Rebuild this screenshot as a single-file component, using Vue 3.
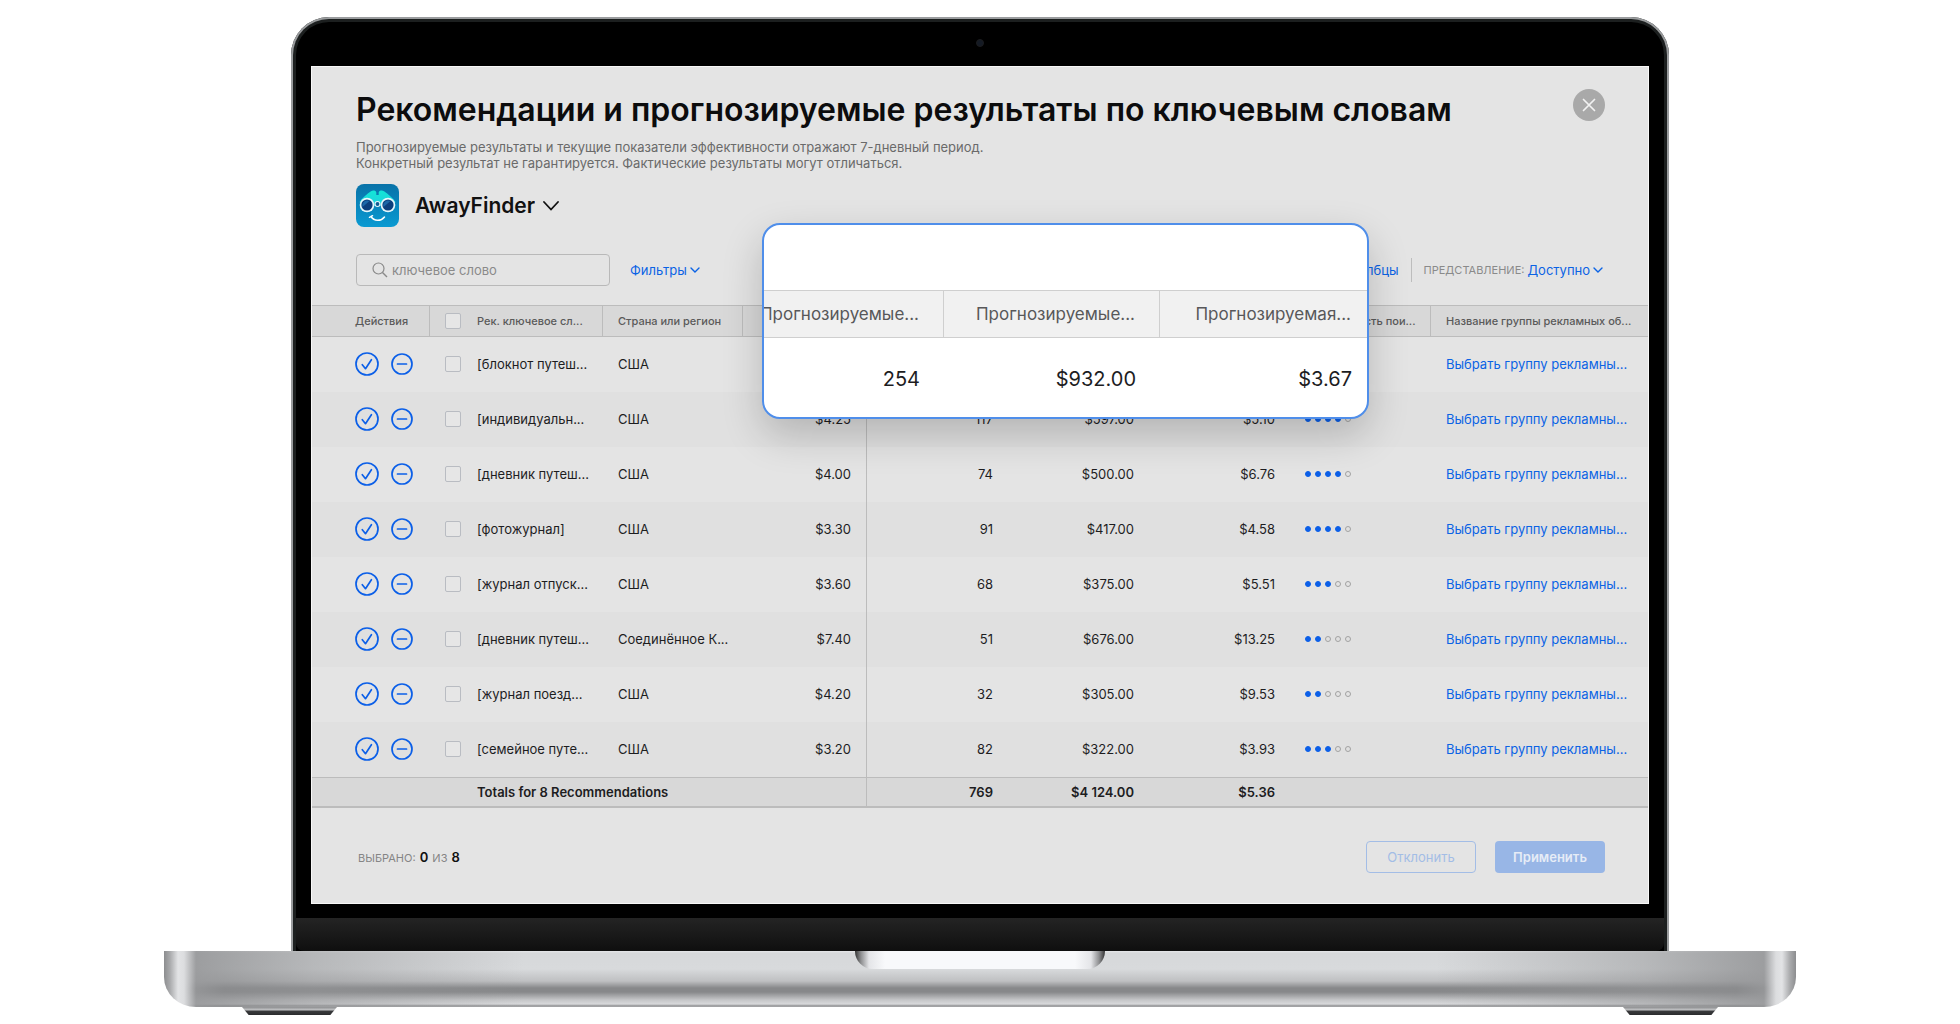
<script setup>
import { ref } from 'vue'

const query = ref('')
const app = ref('AwayFinder')
const view = ref('Доступно')

const rows = ref([
  { keyword: '[блокнот путеш...', country: 'США', bid: '', installs: '', spend: '', cpa: '', popularity: 5 },
  { keyword: '[индивидуальн...', country: 'США', bid: '$4.25', installs: '117', spend: '$597.00', cpa: '$5.10', popularity: 4 },
  { keyword: '[дневник путеш...', country: 'США', bid: '$4.00', installs: '74', spend: '$500.00', cpa: '$6.76', popularity: 4 },
  { keyword: '[фотожурнал]', country: 'США', bid: '$3.30', installs: '91', spend: '$417.00', cpa: '$4.58', popularity: 4 },
  { keyword: '[журнал отпуск...', country: 'США', bid: '$3.60', installs: '68', spend: '$375.00', cpa: '$5.51', popularity: 3 },
  { keyword: '[дневник путеш...', country: 'Соединённое К...', bid: '$7.40', installs: '51', spend: '$676.00', cpa: '$13.25', popularity: 2 },
  { keyword: '[журнал поезд...', country: 'США', bid: '$4.20', installs: '32', spend: '$305.00', cpa: '$9.53', popularity: 2 },
  { keyword: '[семейное путе...', country: 'США', bid: '$3.20', installs: '82', spend: '$322.00', cpa: '$3.93', popularity: 3 },
])
</script>

<template>
  <main class="stage">
    <div class="lid">
      <span class="camera"></span>
      <section class="screen">
        <header class="head">
          <div class="title-row">
            <h1>Рекомендации и прогнозируемые результаты по ключевым словам</h1>
            <button class="close" type="button" aria-label="Закрыть">
              <svg viewBox="0 0 32 32" width="32" height="32"><path d="M10.500 10.500l11 11M21.500 10.500l-11 11" fill="none" stroke="#f2f2f2" stroke-width="1.700" stroke-linecap="round" /></svg>
            </button>
          </div>
          <p class="note">
            Прогнозируемые результаты и текущие показатели эффективности отражают 7-дневный период.<br />
            Конкретный результат не гарантируется. Фактические результаты могут отличаться.
          </p>
          <div class="app-row">
            <svg class="app-icon" viewBox="0 0 43 43" width="43" height="43" aria-hidden="true">
              <defs>
                <linearGradient id="icon-bg" x1="0" y1="0" x2="0" y2="1"><stop offset="0" stop-color="#0872a8" /><stop offset="1" stop-color="#0a9ad2" /></linearGradient>
                <linearGradient id="icon-body" x1="0" y1="0" x2="0" y2="1"><stop offset="0" stop-color="#12e6d6" /><stop offset="1" stop-color="#22d0e0" /></linearGradient>
              </defs>
              <rect width="43" height="43" rx="8" fill="url(#icon-bg)" />
              <path d="M3.500 18C6 14 11 10 15 7.200C17 6 20 6.500 20.300 8.500V11H22.700V8.500C23 6.500 26 6 28 7.200C32 10 37 14 39.500 18L36 22H7Z" fill="url(#icon-body)" />
              <circle cx="11" cy="21" r="7.300" fill="#e6f7fb" />
              <circle cx="32" cy="21" r="7.300" fill="#e6f7fb" />
              <circle cx="11" cy="21" r="5.600" fill="#0c3f7d" />
              <circle cx="32" cy="21" r="5.600" fill="#0c3f7d" />
              <path d="M6.500 23a5 5 0 0 1 7-6z" fill="#1c67a8" />
              <path d="M27.500 23a5 5 0 0 1 7-6z" fill="#1c67a8" />
              <circle cx="21.500" cy="20" r="3" fill="#e6f7fb" />
              <circle cx="21.500" cy="20" r="1.900" fill="#0c5c93" />
              <path d="M15 32.500C18 37.500 25 37.500 28.500 33M13.500 33.300l3-1.600" fill="none" stroke="#fff" stroke-width="1.500" stroke-linecap="round" />
            </svg>
            <label class="app-pick">
              <select v-model="app" aria-label="Приложение"><option>AwayFinder</option></select>
              <svg viewBox="0 0 16 10" width="16" height="10" aria-hidden="true"><path d="M1 1l7 7.500L15 1" fill="none" stroke="#111" stroke-width="1.800" stroke-linecap="round" /></svg>
            </label>
          </div>
          <div class="tools">
            <label class="search">
              <svg viewBox="0 0 16 16" width="16" height="16" aria-hidden="true"><circle cx="6.500" cy="6.500" r="5.500" fill="none" stroke="#8a8a8a" stroke-width="1.200" /><path d="M10.500 10.500L15 15" stroke="#8a8a8a" stroke-width="1.400" /></svg>
              <input v-model="query" type="text" placeholder="ключевое слово" aria-label="ключевое слово" />
            </label>
            <button class="link" type="button" aria-haspopup="menu">Фильтры
              <svg viewBox="0 0 10 6" width="10" height="6" aria-hidden="true"><path d="M1 1l4 4 4-4" fill="none" stroke="currentColor" stroke-width="1.400" stroke-linecap="round" /></svg>
            </button>
            <button class="link columns" type="button">Столбцы</button>
            <label class="view">
              <span>ПРЕДСТАВЛЕНИЕ:</span>
              <select v-model="view"><option>Доступно</option></select>
              <svg viewBox="0 0 10 6" width="10" height="6" aria-hidden="true"><path d="M1 1l4 4 4-4" fill="none" stroke="currentColor" stroke-width="1.400" stroke-linecap="round" /></svg>
            </label>
          </div>
        </header>

        <table class="grid">
          <colgroup>
            <col class="c-act" /><col class="c-check" /><col class="c-key" /><col class="c-country" /><col class="c-bid" />
            <col class="c-mid" /><col class="c-mid" /><col class="c-mid" /><col class="c-mid" /><col />
          </colgroup>
          <thead>
            <tr>
              <th class="act">Действия</th>
              <th class="check bare"><input type="checkbox" aria-label="Выбрать все" /></th>
              <th>Рек. ключевое сл...</th>
              <th>Страна или регион</th>
              <th></th>
              <th></th>
              <th></th>
              <th></th>
              <th>Популярность пои...</th>
              <th>Название группы рекламных об...</th>
            </tr>
          </thead>
          <tbody>
            <tr v-for="(row, i) in rows" :key="i">
              <td class="act">
                <div class="actions">
                  <button type="button" aria-label="Применить">
                    <svg viewBox="0 0 24 24" width="24" height="24" stroke-width="1.700"><circle cx="12" cy="12" r="11" /><path d="M7.300 12.700l3.200 4L16.400 7.700" /></svg>
                  </button>
                  <button type="button" aria-label="Отклонить">
                    <svg viewBox="0 0 22 22" width="22" height="22" stroke-width="1.700"><circle cx="11" cy="11" r="10" /><path d="M6.500 11h9" /></svg>
                  </button>
                </div>
              </td>
              <td class="check"><input type="checkbox" :aria-label="row.keyword" /></td>
              <td>{{ row.keyword }}</td>
              <td>{{ row.country }}</td>
              <td class="num bid">{{ row.bid }}</td>
              <td class="num">{{ row.installs }}</td>
              <td class="num">{{ row.spend }}</td>
              <td class="num">{{ row.cpa }}</td>
              <td>
                <div class="dots"><i v-for="n in 5" :key="n" :class="{ on: n <= row.popularity }"></i></div>
              </td>
              <td><a href="#">Выбрать группу рекламны...</a></td>
            </tr>
          </tbody>
          <tfoot>
            <tr>
              <td></td>
              <td></td>
              <td colspan="2">Totals for 8 Recommendations</td>
              <td class="bid"></td>
              <td class="num">769</td>
              <td class="num">$4 124.00</td>
              <td class="num">$5.36</td>
              <td></td>
              <td></td>
            </tr>
          </tfoot>
        </table>

        <footer class="foot">
          <p>ВЫБРАНО: <b>0</b> ИЗ <b>8</b></p>
          <button class="ghost" type="button" disabled>Отклонить</button>
          <button class="solid" type="button" disabled>Применить</button>
        </footer>

        <aside class="lens">
          <table>
            <thead>
              <tr><th>Прогнозируемые...</th><th>Прогнозируемые...</th><th>Прогнозируемая...</th></tr>
            </thead>
            <tbody>
              <tr><td>254</td><td>$932.00</td><td>$3.67</td></tr>
            </tbody>
          </table>
        </aside>
      </section>
      <div class="chin"></div>
    </div>
    <div class="base"><div class="notch"></div></div>
    <div class="feet"><span></span><span></span></div>
  </main>
</template>

<style>
body {
  margin: 0;
  background: #fff;
}
</style>

<style scoped>
.stage {
  box-sizing: border-box;
  min-width: 1700px;
  padding: 17px 164px 9px;
  font-family: Inter, "Noto Sans", sans-serif;
  font-size: 13px;
  line-height: 16px;
  color: #1d1d1f;
}

button,
input,
select {
  font: inherit;
  color: inherit;
  margin: 0;
  padding: 0;
  border: 0;
  background: none;
  appearance: none;
}

/* Laptop lid */
.lid {
  position: relative;
  margin: 0 127px;
  padding: 44px 15px 0;
  background: #000;
  border: 5px solid #1c1f1f;
  border-bottom: 0;
  border-radius: 38px 38px 0 0;
}

.lid::before {
  content: "";
  position: absolute;
  inset: -5px -5px 0;
  border: 2px solid #9a9c9e;
  border-bottom: 0;
  border-radius: 38px 38px 0 0;
}

.camera {
  position: absolute;
  top: 17px;
  left: 50%;
  width: 8px;
  height: 8px;
  margin-left: -4px;
  border-radius: 50%;
  background: #141a24;
  border: 1px solid #1c1c1e;
  box-sizing: border-box;
}

.chin {
  height: 33px;
  margin: 14px -15px 0;
  background: linear-gradient(#242424, #0f0f0f);
  border-radius: 0 0 8px 8px;
}

.screen {
  position: relative;
  box-sizing: border-box;
  background: #e4e4e4;
  border: 1px solid #f8f8f8;
}

/* Heading */
.head {
  padding: 22px 43px 19px 44px;
}

.title-row {
  display: flex;
  justify-content: space-between;
  align-items: flex-start;
}

h1 {
  margin: 0;
  font-size: 32px;
  line-height: 42px;
  font-weight: 600;
  color: #0c0c0d;
  white-space: nowrap;
}

.close {
  width: 32px;
  height: 32px;
  border-radius: 50%;
  background: #a9a9a9;
}

.close svg {
  display: block;
}

.note {
  margin: 8px 0 13px;
  font-size: 13px;
  color: #6a6a6a;
}

.app-row {
  display: flex;
  align-items: center;
  gap: 16px;
  margin-bottom: 27px;
}

.app-pick {
  display: flex;
  align-items: center;
  gap: 8px;
}

.app-pick select {
  field-sizing: content;
  font-size: 21px;
  line-height: 28px;
  font-weight: 600;
  color: #111;
}

.tools {
  display: flex;
  align-items: center;
}

.search {
  box-sizing: border-box;
  display: flex;
  align-items: center;
  gap: 4px;
  width: 254px;
  height: 32px;
  margin-right: 20px;
  padding: 0 15px;
  border: 1px solid #b9b9b9;
  border-radius: 4px;
}

.search input {
  flex: 1;
  min-width: 0;
}

.search input::placeholder {
  color: #8a8a8a;
  opacity: 1;
}

.link {
  display: flex;
  align-items: center;
  gap: 3px;
  color: #0b63e5;
}

.columns {
  margin-left: auto;
}

.view {
  display: flex;
  align-items: center;
  gap: 3px;
  height: 24px;
  margin-left: 12px;
  padding: 0 2px 0 12px;
  border-left: 1px solid #bdbdbd;
  color: #0b63e5;
}

.view span {
  font-size: 11px;
  color: #8a8a8a;
}

.view select {
  field-sizing: content;
}

/* Recommendations table */
.grid {
  width: 100%;
  table-layout: fixed;
  border-collapse: separate;
  border-spacing: 0;
}

.c-act { width: 118px; }
.c-check { width: 32px; }
.c-key { width: 141px; }
.c-country { width: 140px; }
.c-bid { width: 124px; }
.c-mid { width: 141px; }

.grid th,
.grid td {
  box-sizing: border-box;
  padding: 0 15px;
  text-align: left;
  white-space: nowrap;
}

.grid th {
  height: 32px;
  font-size: 11px;
  font-weight: 500;
  color: #5a5a5a;
  background: #d8d8d8;
  border-top: 1px solid #bcbcbc;
  border-bottom: 1px solid #bcbcbc;
  border-right: 1px solid #bcbcbc;
}

.grid th.bare,
.grid th:last-child {
  border-right: 0;
}

.grid tbody td {
  height: 55px;
  padding-bottom: 2px;
}

.grid tbody tr:nth-child(even) {
  background: #e0e0e0;
}

.grid .act {
  padding-left: 43px;
  padding-right: 0;
}

.grid .check {
  padding-right: 0;
}

.grid .num {
  text-align: right;
}

.grid td.bid {
  border-right: 1px solid #bcbcbc;
}

.grid tfoot td {
  height: 31px;
  font-weight: 600;
  background: #d8d8d8;
  border-top: 1px solid #bcbcbc;
  border-bottom: 2px solid #bcbcbc;
}

.actions {
  display: flex;
  align-items: center;
  gap: 12px;
}

.actions svg {
  display: block;
  fill: none;
  stroke: #0b5fe8;
  stroke-linecap: round;
  stroke-linejoin: round;
}

.check input {
  display: block;
  box-sizing: border-box;
  width: 16px;
  height: 16px;
  border: 1px solid #b9bcc2;
  border-radius: 2px;
  background: #e6e6e6;
}

.dots {
  display: flex;
  gap: 4px;
}

.dots i {
  box-sizing: border-box;
  width: 6px;
  height: 6px;
  border: 1px solid #a2a2a2;
  border-radius: 50%;
}

.dots .on {
  border-color: #0b5fe8;
  background: #0b5fe8;
}

.grid a {
  color: #0b63e5;
  text-decoration: none;
}

/* Footer */
.foot {
  display: flex;
  align-items: center;
  gap: 19px;
  padding: 33px 43px 30px 46px;
}

.foot p {
  margin: 0 auto 0 0;
  font-size: 11px;
  color: #858585;
}

.foot b {
  margin: 0 1px;
  font-size: 13px;
  font-weight: 600;
  color: #111;
}

.foot button {
  box-sizing: border-box;
  width: 110px;
  height: 32px;
  border-radius: 4px;
}

.ghost {
  border: 1px solid #a3bde6;
  color: #a3bde6;
}

.foot .solid {
  background: #98b6e6;
  color: #e6ecf6;
  font-weight: 600;
}

/* Magnified columns */
.lens {
  position: absolute;
  top: 156px;
  left: 450px;
  box-sizing: border-box;
  width: 607px;
  height: 196px;
  padding-top: 65px;
  overflow: hidden;
  background: #fff;
  border: 2px solid #4f8eea;
  border-radius: 18px;
  box-shadow: 0 16px 40px rgba(0, 0, 0, 0.2);
}

.lens table {
  width: 648px;
  margin-left: -36px;
  table-layout: fixed;
  border-spacing: 0;
}

.lens th,
.lens td {
  box-sizing: border-box;
  padding: 0 24px;
  text-align: right;
  white-space: nowrap;
}

.lens th {
  height: 48px;
  font-size: 17px;
  line-height: 20px;
  font-weight: 400;
  color: #58585a;
  background: #f1f1f1;
  border: solid #cfcfcf;
  border-width: 1px 1px 1px 0;
}

.lens td {
  height: 82px;
  font-size: 20px;
}

/* Laptop base */
.base {
  height: 56px;
  background:
    linear-gradient(90deg, #8c8d8f 0, #a9aaac 6px, #e2e3e5 14px, #dcdddf 20px, rgba(150, 151, 153, 0.9) 32px, rgba(140, 141, 143, 0.7) 60px, rgba(150, 151, 153, 0.5) 150px, rgba(150, 151, 153, 0) 360px, rgba(150, 151, 153, 0) calc(100% - 360px), rgba(150, 151, 153, 0.5) calc(100% - 150px), rgba(140, 141, 143, 0.7) calc(100% - 60px), rgba(150, 151, 153, 0.9) calc(100% - 32px), #dcdddf calc(100% - 20px), #e2e3e5 calc(100% - 14px), #a9aaac calc(100% - 6px), #8c8d8f 100%),
    linear-gradient(#e6e7e9 0, #d6d8da 2px, #d8dadc 18px, #bfc0c2 30px, #87888a 37px, #87888a 41px, #c6c7c9 49px, #d8d9db 53px, #8f9092 55px, #b5b6b8 56px);
  border-radius: 0 0 32px 32px / 0 0 30px 30px;
}

.notch {
  width: 250px;
  height: 18px;
  margin: 0 auto;
  background: linear-gradient(90deg, #333 0, #8e8f91 6px, #e4e5e8 14px, #f8f9fb 30px, #f8f9fb calc(100% - 30px), #e4e5e8 calc(100% - 14px), #8e8f91 calc(100% - 6px), #333 100%);
  border-radius: 0 0 18px 18px;
}

.feet {
  display: flex;
  justify-content: space-between;
  padding: 0 78px;
}

.feet span {
  width: 95px;
  height: 8px;
  background: linear-gradient(#8d8e90 0, #c4c5c7 3px, #3a3b3d 4px, #2b2c2e 8px);
  clip-path: polygon(0 0, 100% 0, 93% 100%, 7% 100%);
}
</style>
